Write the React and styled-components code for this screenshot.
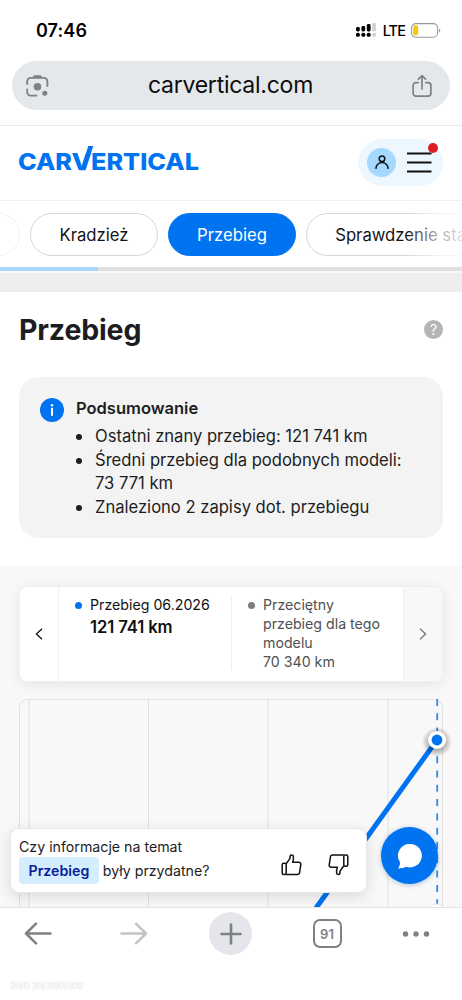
import React from 'react';
import styled, {createGlobalStyle, css} from 'styled-components';

const blue = '#0073f0';
const ink = '#1d1d1f';
const chromeGrey = '#7d8287';

const GlobalStyle = createGlobalStyle`
    * {
        box-sizing: border-box;
    }

    body {
        margin: 0;
        background: #fff;
        color: ${ink};
        font-family: Inter, "Liberation Sans", sans-serif;
    }

    button {
        padding: 0;
        border: 0;
        background: none;
        color: inherit;
        font: inherit;
    }

    svg {
        display: block;
    }
`;

const Screen = styled.div`
    display: flex;
    flex-direction: column;
    width: 462px;
    height: 1000px;
    overflow: hidden;
`;

const StatusBar = styled.div`
    flex: none;
    display: flex;
    align-items: center;
    justify-content: space-between;
    height: 60px;
    padding: 0 21px 0 36px;
    color: #000;
`;

const Clock = styled.span`
    font-size: 18px;
    font-weight: 600;
    letter-spacing: 0.1px;
`;

const Signals = styled.div`
    display: flex;
    align-items: center;
`;

const Network = styled.span`
    margin: 0 6px 0 7px;
    font-size: 14.5px;
    font-weight: 500;
    letter-spacing: -0.9px;
`;

const AddressBar = styled.div`
    flex: none;
    display: flex;
    align-items: center;
    justify-content: space-between;
    height: 49px;
    margin: 1px 12px 15px;
    padding: 0 18px 0 14px;
    border-radius: 25px;
    background: #e5e8eb;
`;

const Address = styled.span`
    margin-top: -1px;
    color: #0c0c0e;
    font-size: 23px;
    letter-spacing: -0.25px;
`;

const Header = styled.header`
    flex: none;
    display: flex;
    align-items: center;
    justify-content: space-between;
    height: 76px;
    padding: 0 19px 2px 17px;
    border-top: 1px solid #e9eaec;
    border-bottom: 1px solid #efeff0;
`;

const Account = styled.div`
    position: relative;
    display: flex;
    align-items: center;
    gap: 11px;
    width: 85px;
    height: 47px;
    padding-left: 9px;
    border-radius: 24px;
    background: #edf7ff;
`;

const Avatar = styled.div`
    display: grid;
    place-items: center;
    width: 29px;
    height: 29px;
    border-radius: 50%;
    background: #a6d9ff;
`;

const Alert = styled.span`
    position: absolute;
    top: 4px;
    right: 5px;
    width: 10px;
    height: 10px;
    border-radius: 50%;
    background: #dc1f22;
`;

const Tabs = styled.nav`
    position: relative;
    flex: none;
    display: flex;
    gap: 10px;
    height: 66px;
    padding-top: 12px;
    overflow: hidden;

    &::after {
        content: '';
        position: absolute;
        top: 0;
        right: 0;
        width: 56px;
        height: 60px;
        background: linear-gradient(90deg, rgba(255, 255, 255, 0), rgba(255, 255, 255, 0.6) 50%, rgba(255, 255, 255, 0.88));
    }
`;

const Tab = styled.button`
    flex: none;
    width: ${({$width}) => $width}px;
    height: 43px;
    border: 1px solid #d6d6d8;
    border-radius: 22px;
    color: #151517;
    font-size: 16.7px;
    white-space: nowrap;

    ${({$active}) => $active && css`
        border-color: ${blue};
        background: ${blue};
        color: #fff;
    `}

    ${({$faded}) => $faded && css`
        margin-left: -80px;
        border-color: #f0f0f1;
    `}
`;

const ScrollTrack = styled.div`
    flex: none;
    height: 4px;
    background: #e0e0e0;
`;

const ScrollThumb = styled.div`
    width: 98px;
    height: 4px;
    background: #a8d9fb;
`;

const Divider = styled.div`
    flex: none;
    height: 21px;
    border-top: 2px solid #f8f8f8;
    background: #eeeeee;
`;

const Heading = styled.div`
    flex: none;
    display: flex;
    align-items: center;
    justify-content: space-between;
    height: 85px;
    padding: 0 19px 11px;
`;

const Title = styled.h1`
    margin: 0;
    font-size: 28.5px;
    font-weight: 700;
    letter-spacing: -0.15px;
`;

const Help = styled.span`
    display: grid;
    place-items: center;
    width: 19px;
    height: 19px;
    border-radius: 50%;
    background: #b5b5b5;
    color: #fff;
    font-size: 14px;
    line-height: 19px;
`;

const Summary = styled.section`
    flex: none;
    display: flex;
    gap: 12px;
    height: 161px;
    margin: 0 19px 28px;
    padding: 20px 21px 0;
    border-radius: 20px;
    background: #f3f3f3;
`;

const SummaryBody = styled.div`
    font-size: 16.58px;
    line-height: 23.8px;
    white-space: nowrap;
`;

const SummaryTitle = styled.div`
    margin-bottom: 4px;
    font-size: 16.5px;
    font-weight: 600;
`;

const InfoIcon = styled.svg`
    flex: none;
    margin-top: 1px;
`;

const Facts = styled.ul`
    margin: 0;
    padding: 0;
    list-style: none;
`;

const Fact = styled.li`
    display: flex;
    gap: 13px;

    &::before {
        content: '';
        flex: none;
        width: 6px;
        height: 6px;
        margin-top: 9px;
        border-radius: 50%;
        background: ${ink};
    }
`;

const ChartSection = styled.section`
    position: relative;
    flex: none;
    height: 341px;
    padding: 20px 19px 0;
    background: #f8f8f8;
    overflow: hidden;
`;

const Readout = styled.div`
    display: flex;
    width: 424px;
    height: 96px;
    border: 1px solid #f0f0f0;
    border-radius: 8px;
    background: #fff;
    box-shadow: 0 3px 14px rgba(0, 0, 0, 0.08);
    overflow: hidden;
`;

const Step = styled.button`
    flex: none;
    display: grid;
    place-items: center;
    width: 39px;
    border-${({$side}) => $side}: 1px solid #efefef;
    background: ${({$muted}) => ($muted ? '#f8f8f8' : '#fff')};
`;

const Reading = styled.div`
    position: relative;
    flex: none;
    width: ${({$width}) => $width}px;
    margin: 8px 0 11px;
    padding-left: 31px;
    color: ${({$color}) => $color};
    font-size: 14.2px;
    line-height: 19px;
    white-space: nowrap;

    &::before {
        content: '';
        position: absolute;
        top: 7px;
        left: 16px;
        width: 7px;
        height: 7px;
        border-radius: 50%;
        background: ${({$dot}) => $dot};
    }

    & + & {
        border-left: 1px solid #efefef;
    }
`;

const Value = styled.strong`
    display: block;
    margin-top: 2px;
    font-size: 16.7px;
    font-weight: 600;
    line-height: 22px;
    letter-spacing: -0.12px;
`;

const Chart = styled.svg`
    margin: 17px 0 0 -19px;
`;

const Feedback = styled.div`
    position: absolute;
    left: 10px;
    bottom: 14px;
    display: flex;
    align-items: center;
    width: 357px;
    height: 65px;
    padding-left: 9px;
    border: 1px solid #e8e8e8;
    border-radius: 9px;
    background: #fff;
    box-shadow: 0 4px 14px rgba(0, 0, 0, 0.12);
`;

const Question = styled.div`
    width: 262px;
    margin: -3px 0 0 -1px;
    font-size: 14.2px;
    line-height: 24px;
    white-space: nowrap;
`;

const Topic = styled.span`
    margin-right: 4px;
    padding: 5px 9.5px;
    border-radius: 4px;
    background: #d5eeff;
    color: #06209b;
    font-weight: 600;
`;

const Votes = styled.div`
    display: flex;
    gap: 26px;
    margin-top: 9px;
`;

const ChatButton = styled.button`
    position: absolute;
    right: 24px;
    bottom: 23px;
    display: grid;
    place-items: center;
    width: 57px;
    height: 57px;
    border-radius: 50%;
    background: ${blue};
    box-shadow: 0 1px 5px rgba(0, 60, 130, 0.3);
`;

const Toolbar = styled.footer`
    position: relative;
    flex: 1;
    display: flex;
    align-items: flex-start;
    gap: 53.5px;
    padding: 4px 0 0 16px;
    border-top: 1px solid #e2e3e5;
    background: #fff;
    color: ${chromeGrey};
`;

const Tool = styled.button`
    flex: none;
    display: grid;
    place-items: center;
    width: 43px;
    height: 43px;
    border-radius: 50%;
    background: ${({$filled}) => ($filled ? '#e5e6eb' : 'none')};

    &:last-of-type {
        margin-left: -8px;
    }
`;

const TabCount = styled.span`
    display: grid;
    place-items: center;
    width: 29px;
    height: 29px;
    border: 2.5px solid ${chromeGrey};
    border-radius: 7px;
    font-size: 13px;
    font-weight: 600;
    line-height: 24px;
`;

const Stamp = styled.span`
    position: absolute;
    top: 72px;
    left: 10px;
    color: #fff;
    font-size: 9.5px;
    letter-spacing: -0.5px;
    line-height: 12px;
    text-shadow: 0 0 1px #bbb;
    white-space: nowrap;
`;

const SignalIcon = () => (
    <svg width="20" height="14" viewBox="0 0 20 14">
        {[[4, 4.5], [3, 5.5], [1, 7.5], [0, 8.5]].map(([y, height], i) => (
            <React.Fragment key={y}>
                <rect
                    x={i * 5.4}
                    y={y}
                    width="3.8"
                    height={height}
                    rx="1.4"
                    fill={i === 3 ? '#d0d0d0' : '#000'}
                />
                <rect
                    x={i * 5.4}
                    y="9.8"
                    width="3.8"
                    height="4"
                    rx="1.5"
                    fill={i === 3 ? '#d0d0d0' : '#000'}
                />
            </React.Fragment>
        ))}
    </svg>
);

const BatteryIcon = () => (
    <svg width="30" height="15" viewBox="0 0 30 15">
        <rect x="0.6" y="0.6" width="26" height="13.6" rx="4.3" fill="none" stroke="#999" strokeWidth="1.1" />
        <rect x="2.2" y="2.3" width="5" height="10.2" rx="2.4" fill="#f8c70a" />
        <path d="M28.2 5.4c1.4.7 1.4 3.3 0 4z" fill="#888" />
    </svg>
);

const LensIcon = () => (
    <svg width="23" height="24" viewBox="0 0 23 24" fill="none" stroke={chromeGrey} strokeWidth="1.9">
        <path d="M1.2 10V7.5a3.6 3.6 0 0 1 3.6-3.6h13a3.6 3.6 0 0 1 3.6 3.6V12" strokeLinecap="round" />
        <path d="M1.2 15.5V18a3.6 3.6 0 0 0 3.6 3.6h5.5" strokeLinecap="round" />
        <path d="M6.2 3.8 8 1.2h6.8l1.8 2.6z" fill={chromeGrey} stroke="none" />
        <circle cx="11.5" cy="12.8" r="3.8" fill={chromeGrey} stroke="none" />
        <circle cx="18.8" cy="19.2" r="2.5" fill={chromeGrey} stroke="none" />
    </svg>
);

const ShareIcon = () => (
    <svg width="20" height="24" viewBox="0 0 20 24" fill="none" stroke={chromeGrey} strokeWidth="1.7">
        <path
            d="M6.3 8.6H4a2.9 2.9 0 0 0-2.9 2.9v7.8A2.9 2.9 0 0 0 4 22.2h12a2.9 2.9 0 0 0 2.9-2.9v-7.8A2.9 2.9 0 0 0 16 8.6h-2.3M10 15V1.8M6.4 5.2 10 1.6l3.6 3.6"
            strokeLinecap="round"
            strokeLinejoin="round"
        />
    </svg>
);

const Logo = () => (
    <svg width="186" height="34" viewBox="0 0 186 34" fill={blue}>
        <g fontFamily="Inter, sans-serif" fontSize="23.2" fontWeight="800">
            <text x="1" y="25.3" textLength="54" lengthAdjust="spacingAndGlyphs">CAR</text>
            <text x="54.5" y="25.3" textLength="20" lengthAdjust="spacingAndGlyphs">V</text>
            <text x="74" y="25.3" textLength="108" lengthAdjust="spacingAndGlyphs">ERTICAL</text>
        </g>
        {/* long right arm of the V */}
        <path d="M63.5 25.3h5L76.3 1h-5z" />
    </svg>
);

const ThumbIcon = ({down}) => (
    <svg width="21" height="22" viewBox="0 0 21 22" fill="none" stroke="#111" strokeWidth="1.5" strokeLinejoin="round">
        <g transform={down ? 'rotate(180 10.5 10.75)' : undefined}>
            <path d="M5.2 9.8 9 4.4V2.6a1.7 1.7 0 0 1 3.4.2c.2 1.9-.1 3.7-.8 5.4h6.2a2 2 0 0 1 2 2.3l-1.2 8a2.3 2.3 0 0 1-2.3 2H5.2" />
            <rect x="1.2" y="9.2" width="4" height="11.3" rx="1.5" />
        </g>
    </svg>
);

const Arrow = ({flip, color}) => (
    <svg width="28" height="23" viewBox="0 0 28 23" fill="none" stroke={color} strokeWidth="2.5">
        <path
            d="M26.5 11.5H2M12 1.7 2 11.5l10 9.8"
            transform={flip ? 'rotate(180 14 11.5)' : undefined}
            strokeLinecap="round"
            strokeLinejoin="round"
        />
    </svg>
);

const Chevron = ({flip, color}) => (
    <svg width="8" height="12" viewBox="0 0 8 12" fill="none" stroke={color} strokeWidth="1.3">
        <path d={flip ? 'M1 .7 6.6 6 1 11.3' : 'M7 .7 1.4 6 7 11.3'} />
    </svg>
);

const MileageChart = () => (
    <Chart width="462" height="209" viewBox="0 0 462 209" fill="none">
        <defs>
            <radialGradient id="halo">
                <stop offset="0.5" stopOpacity="0.3" />
                <stop offset="1" stopOpacity="0" />
            </radialGradient>
        </defs>
        <rect x="19.5" y="0.5" width="423" height="260" rx="8" stroke="#e0e0e0" />
        {[29, 148.5, 268, 388].map(x => (
            <path key={x} d={`M${x} 1v208`} stroke="#e0e0e0" />
        ))}
        <path d="M437.2 0v209" stroke="#3688ec" strokeWidth="1.8" strokeDasharray="7 7.3" />
        <path d="M437 41 316 209" stroke={blue} strokeWidth="5" />
        <circle cx="437" cy="43" r="15" fill="url(#halo)" />
        <circle cx="437" cy="41" r="9" fill="#fff" />
        <circle cx="437" cy="41" r="5.4" fill={blue} />
        <circle cx="437" cy="214" r="9" fill="#fff" stroke="#eee5e5" />
    </Chart>
);

const tabs = [
    {label: '', width: 100, faded: true},
    {label: 'Kradzież', width: 128},
    {label: 'Przebieg', width: 128, active: true},
    {label: 'Sprawdzenie stanu', width: 209}
];

export default function App() {
    return (
        <Screen>
            <GlobalStyle />
            <StatusBar>
                <Clock>07:46</Clock>
                <Signals>
                    <SignalIcon />
                    <Network>LTE</Network>
                    <BatteryIcon />
                </Signals>
            </StatusBar>
            <AddressBar>
                <LensIcon />
                <Address>carvertical.com</Address>
                <ShareIcon />
            </AddressBar>
            <Header>
                <Logo />
                <Account>
                    <Avatar>
                        <svg width="14" height="14" viewBox="0 0 14 14" fill="none" stroke="#111" strokeWidth="1.5">
                            <circle cx="7" cy="3.8" r="2.8" />
                            <path d="M1 13.3a6 5.7 0 0 1 12 0" strokeLinecap="round" />
                        </svg>
                    </Avatar>
                    <svg width="25" height="21" viewBox="0 0 25 21" stroke="#111" strokeWidth="2">
                        <path d="M0 1.5h24.5M0 10.5h24.5M0 19.5h24.5" />
                    </svg>
                    <Alert />
                </Account>
            </Header>
            <Tabs>
                {tabs.map(({label, width, active, faded}) => (
                    <Tab key={label} $width={width} $active={active} $faded={faded}>
                        {label}
                    </Tab>
                ))}
            </Tabs>
            <ScrollTrack>
                <ScrollThumb />
            </ScrollTrack>
            <Divider />
            <Heading>
                <Title>Przebieg</Title>
                <Help>?</Help>
            </Heading>
            <Summary>
                <InfoIcon width="24" height="24" viewBox="0 0 24 24" fill="#fff">
                    <circle cx="12" cy="12" r="12" fill={blue} />
                    <circle cx="12" cy="7.3" r="1.2" />
                    <rect x="11" y="9.8" width="2" height="8" />
                </InfoIcon>
                <SummaryBody>
                    <SummaryTitle>Podsumowanie</SummaryTitle>
                    <Facts>
                        <Fact>Ostatni znany przebieg: 121 741 km</Fact>
                        <Fact>
                            <span>Średni przebieg dla podobnych modeli:<br />73 771 km</span>
                        </Fact>
                        <Fact>Znaleziono 2 zapisy dot. przebiegu</Fact>
                    </Facts>
                </SummaryBody>
            </Summary>
            <ChartSection>
                <Readout>
                    <Step $side="right">
                        <Chevron color="#111" />
                    </Step>
                    <Reading $width={172} $color="#111" $dot={blue}>
                        Przebieg 06.2026
                        <Value>121 741 km</Value>
                    </Reading>
                    <Reading $width={172} $color="#505050" $dot="#7d7d7d">
                        Przeciętny<br />
                        przebieg dla tego<br />
                        modelu<br />
                        70 340 km
                    </Reading>
                    <Step $side="left" $muted>
                        <Chevron flip color="#777" />
                    </Step>
                </Readout>
                <MileageChart />
                <Feedback>
                    <Question>
                        Czy informacje na temat<br />
                        <Topic>Przebieg</Topic>były przydatne?
                    </Question>
                    <Votes>
                        <ThumbIcon />
                        <ThumbIcon down />
                    </Votes>
                </Feedback>
                <ChatButton>
                    <svg width="26" height="26" viewBox="0 0 26 26" fill="#fff">
                        <path d="M13.5 1a11.7 11.7 0 1 1-4.3 22.7c-2.6 1.3-5.3 1.8-8.2 1.7 1.5-2 2.1-4 1.9-6.3A11.7 11.7 0 0 1 13.5 1z" />
                    </svg>
                </ChatButton>
            </ChartSection>
            <Toolbar>
                <Tool>
                    <Arrow color={chromeGrey} />
                </Tool>
                <Tool>
                    <Arrow flip color="#c3c4c6" />
                </Tool>
                <Tool $filled>
                    <svg width="22" height="22" viewBox="0 0 22 22" stroke="currentColor" strokeWidth="2.6" strokeLinecap="round">
                        <path d="M11 1.5v19M1.5 11h19" />
                    </svg>
                </Tool>
                <Tool>
                    <TabCount>91</TabCount>
                </Tool>
                <Tool>
                    <svg width="28" height="6" viewBox="0 0 28 6" fill="currentColor">
                        <circle cx="3.5" cy="3" r="2.7" />
                        <circle cx="14" cy="3" r="2.7" />
                        <circle cx="24.5" cy="3" r="2.7" />
                    </svg>
                </Tool>
                <Stamp>20/0 20/26/07/06</Stamp>
            </Toolbar>
        </Screen>
    );
}
